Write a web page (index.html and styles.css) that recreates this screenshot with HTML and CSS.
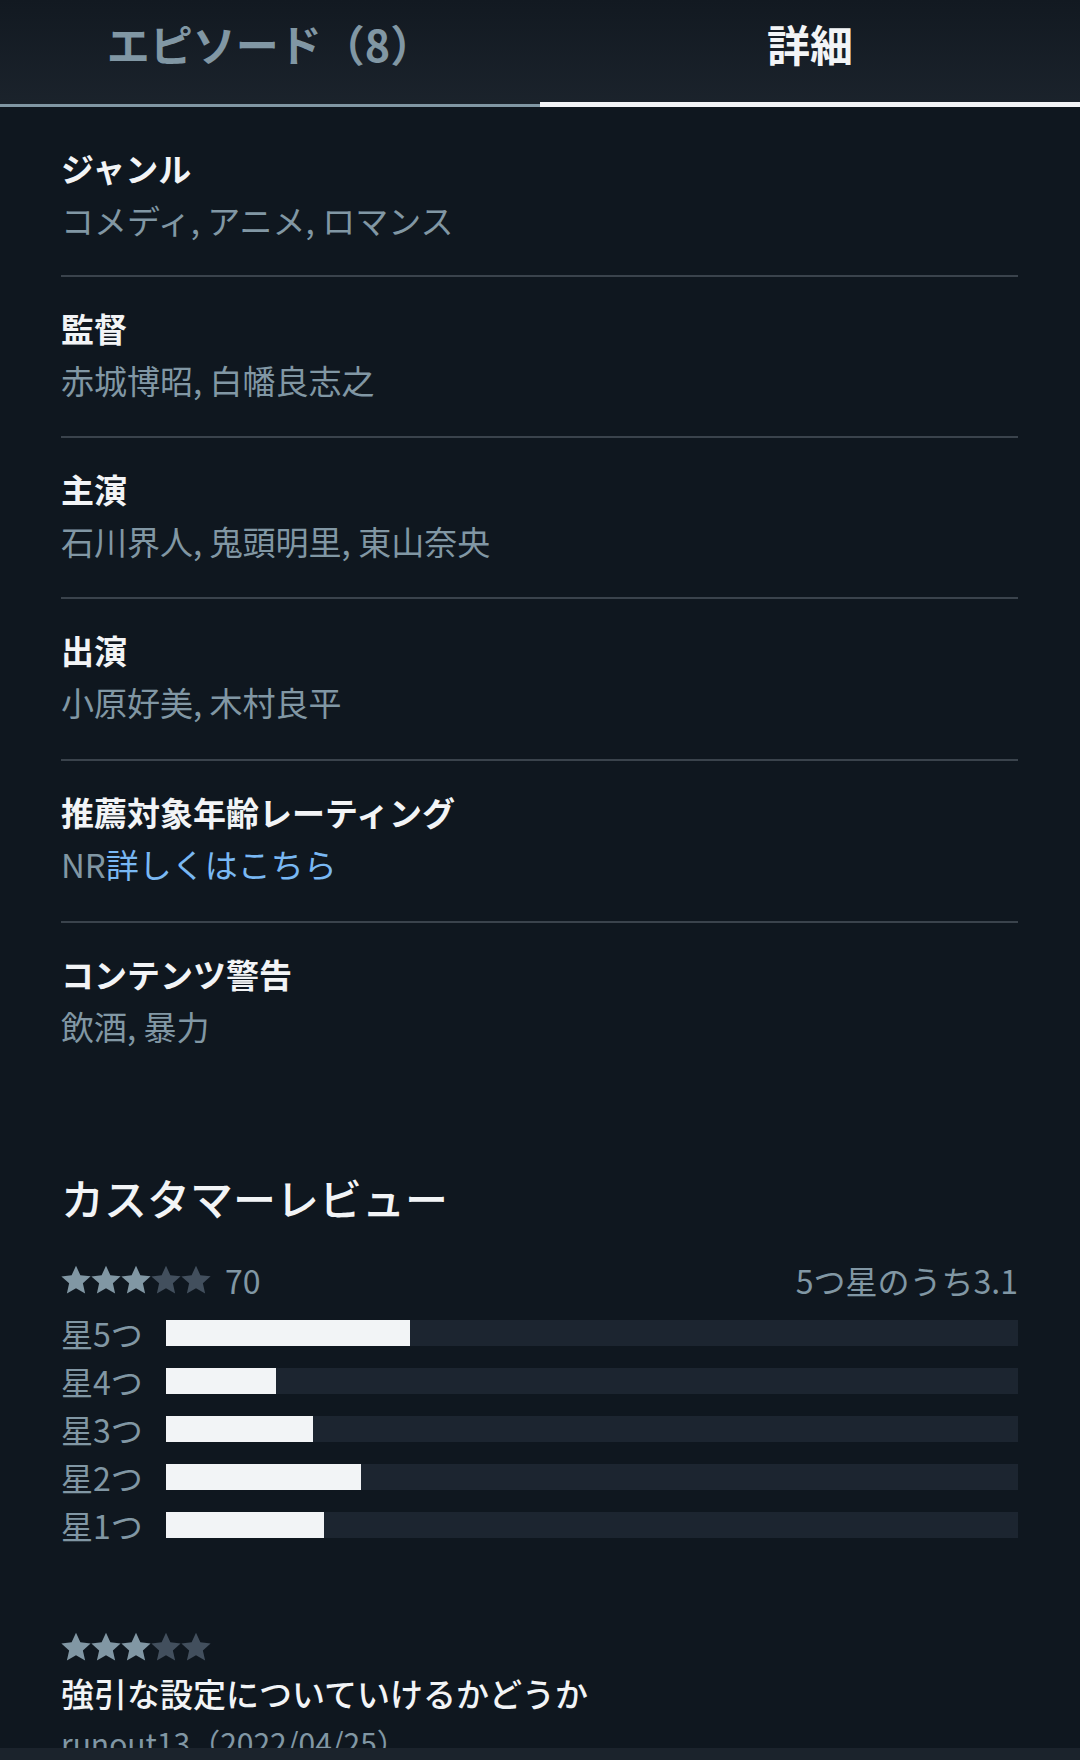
FILE: index.html
```html
<!DOCTYPE html>
<html lang="ja">
  <head>
    <meta charset="utf-8" />
    <meta name="viewport" content="width=device-width, initial-scale=1.0" />
    <link rel="stylesheet" href="styles.css">
  </head>
  <body>
    <header class="tabs">
      <a href="#" class="tab">エピソード（8）</a>
      <a href="#" class="tab active">詳細</a>
    </header>

    <main class="container">
      <dl class="details">
        <div class="detail-row">
          <dt class="detail-label">ジャンル</dt>
          <dd class="detail-value">コメディ, アニメ, ロマンス</dd>
        </div>
        <div class="detail-row">
          <dt class="detail-label">監督</dt>
          <dd class="detail-value">赤城博昭, 白幡良志之</dd>
        </div>
        <div class="detail-row">
          <dt class="detail-label">主演</dt>
          <dd class="detail-value">石川界人, 鬼頭明里, 東山奈央</dd>
        </div>
        <div class="detail-row">
          <dt class="detail-label">出演</dt>
          <dd class="detail-value">小原好美, 木村良平</dd>
        </div>
        <div class="detail-row">
          <dt class="detail-label">推薦対象年齢レーティング</dt>
          <dd class="detail-value">NR<a href="#" class="link">詳しくはこちら</a></dd>
        </div>
        <div class="detail-row">
          <dt class="detail-label">コンテンツ警告</dt>
          <dd class="detail-value">飲酒, 暴力</dd>
        </div>
      </dl>

      <section class="reviews">
        <h2 class="reviews-title">カスタマーレビュー</h2>

        <div class="summary">
          <div class="stars">
            <svg viewBox="0 0 24 24" class="star on"><path d="M12 .6l3.5 7.6 8.2.9-6.2 5.6 1.8 8.1L12 18.6l-7.3 4.2 1.8-8.1L.3 9.1l8.2-.9z"/></svg>
            <svg viewBox="0 0 24 24" class="star on"><path d="M12 .6l3.5 7.6 8.2.9-6.2 5.6 1.8 8.1L12 18.6l-7.3 4.2 1.8-8.1L.3 9.1l8.2-.9z"/></svg>
            <svg viewBox="0 0 24 24" class="star on"><path d="M12 .6l3.5 7.6 8.2.9-6.2 5.6 1.8 8.1L12 18.6l-7.3 4.2 1.8-8.1L.3 9.1l8.2-.9z"/></svg>
            <svg viewBox="0 0 24 24" class="star"><path d="M12 .6l3.5 7.6 8.2.9-6.2 5.6 1.8 8.1L12 18.6l-7.3 4.2 1.8-8.1L.3 9.1l8.2-.9z"/></svg>
            <svg viewBox="0 0 24 24" class="star"><path d="M12 .6l3.5 7.6 8.2.9-6.2 5.6 1.8 8.1L12 18.6l-7.3 4.2 1.8-8.1L.3 9.1l8.2-.9z"/></svg>
          </div>
          <span class="count">70</span>
          <span class="average">5つ星のうち3.1</span>
        </div>

        <div class="histogram">
          <div class="bar-row">
            <span class="bar-label">星5つ</span>
            <div class="bar-track"><div class="bar-fill" style="width: 28.6%"></div></div>
          </div>
          <div class="bar-row">
            <span class="bar-label">星4つ</span>
            <div class="bar-track"><div class="bar-fill" style="width: 12.9%"></div></div>
          </div>
          <div class="bar-row">
            <span class="bar-label">星3つ</span>
            <div class="bar-track"><div class="bar-fill" style="width: 17.2%"></div></div>
          </div>
          <div class="bar-row">
            <span class="bar-label">星2つ</span>
            <div class="bar-track"><div class="bar-fill" style="width: 22.9%"></div></div>
          </div>
          <div class="bar-row">
            <span class="bar-label">星1つ</span>
            <div class="bar-track"><div class="bar-fill" style="width: 18.6%"></div></div>
          </div>
        </div>

        <article class="review">
          <div class="stars">
            <svg viewBox="0 0 24 24" class="star on"><path d="M12 .6l3.5 7.6 8.2.9-6.2 5.6 1.8 8.1L12 18.6l-7.3 4.2 1.8-8.1L.3 9.1l8.2-.9z"/></svg>
            <svg viewBox="0 0 24 24" class="star on"><path d="M12 .6l3.5 7.6 8.2.9-6.2 5.6 1.8 8.1L12 18.6l-7.3 4.2 1.8-8.1L.3 9.1l8.2-.9z"/></svg>
            <svg viewBox="0 0 24 24" class="star on"><path d="M12 .6l3.5 7.6 8.2.9-6.2 5.6 1.8 8.1L12 18.6l-7.3 4.2 1.8-8.1L.3 9.1l8.2-.9z"/></svg>
            <svg viewBox="0 0 24 24" class="star"><path d="M12 .6l3.5 7.6 8.2.9-6.2 5.6 1.8 8.1L12 18.6l-7.3 4.2 1.8-8.1L.3 9.1l8.2-.9z"/></svg>
            <svg viewBox="0 0 24 24" class="star"><path d="M12 .6l3.5 7.6 8.2.9-6.2 5.6 1.8 8.1L12 18.6l-7.3 4.2 1.8-8.1L.3 9.1l8.2-.9z"/></svg>
          </div>
          <h3 class="review-title">強引な設定についていけるかどうか</h3>
          <p class="review-meta">runout13（2022/04/25）</p>
        </article>
      </section>
    </main>

    <div class="bottom-bar"></div>
  </body>
</html>
```

FILE: styles.css
```css
:root {
  --bg-primary: #0f171f;
  --bg-header-top: #121921;
  --bg-header-bottom: #1b232c;
  --text-primary: #f2f4f6;
  --text-secondary: #8197a4;
  --divider: #3a434c;
  --link: #79b8f3;
  --track: #1c2530;
  --star-on: #8197a4;
  --star-off: #424f5d;
}

* {
  box-sizing: border-box;
  margin: 0;
  padding: 0;
}

body {
  min-height: 100vh;
  background: var(--bg-primary);
  font-family: "Noto Sans CJK JP", "Noto Sans", sans-serif;
  color: var(--text-primary);
  overflow: hidden;
}

a {
  text-decoration: none;
}

.tabs {
  display: flex;
  height: 107px;
  background: linear-gradient(180deg, var(--bg-header-top), var(--bg-header-bottom));
}

.tab {
  flex: 1;
  display: flex;
  justify-content: center;
  padding-top: 13px;
  font-size: 43px;
  line-height: 60px;
  font-weight: 700;
  color: var(--text-secondary);
  border-bottom: 3px solid var(--text-secondary);
}

.tab.active {
  color: var(--text-primary);
  border-bottom: 5px solid var(--text-primary);
}

.container {
  padding: 0 62px 0 61px;
}

.details {
  padding-top: 9px;
}

.detail-row {
  display: flex;
  flex-direction: column;
  gap: 6px;
  padding: 28px 0 33px;
  border-bottom: 2px solid var(--divider);
}

.detail-row:first-child {
  padding-top: 29px;
  padding-bottom: 32px;
}

.detail-row:nth-child(4),
.detail-row:nth-child(5) {
  padding-bottom: 34px;
}

.detail-row:last-child {
  border-bottom: none;
}

.detail-label {
  font-size: 33px;
  line-height: 46px;
  font-weight: 700;
}

.detail-value {
  font-size: 33px;
  line-height: 46px;
  color: var(--text-secondary);
}

.link {
  color: var(--link);
}

.reviews {
  margin-top: 86px;
}

.reviews-title {
  font-size: 43px;
  line-height: 58px;
  font-weight: 500;
  margin-bottom: 30px;
}

.summary {
  display: flex;
  align-items: center;
  height: 48px;
  margin-bottom: 5px;
  font-size: 32px;
  color: var(--text-secondary);
}

.stars {
  display: flex;
}

.star {
  width: 30px;
  height: 30px;
  fill: var(--star-off);
}

.star.on {
  fill: var(--star-on);
}

.count {
  margin-left: 14px;
}

.average {
  margin-left: auto;
}

.histogram {
  display: flex;
  flex-direction: column;
}

.bar-row {
  display: flex;
  align-items: center;
  height: 48px;
}

.bar-label {
  width: 105px;
  font-size: 32px;
  line-height: 48px;
  color: var(--text-secondary);
}

.bar-track {
  flex: 1;
  height: 26px;
  background: var(--track);
}

.bar-fill {
  height: 100%;
  background: var(--text-primary);
}

.review {
  margin-top: 83px;
}

.review .stars {
  margin-bottom: 8px;
}

.review-title {
  font-size: 33px;
  line-height: 46px;
  font-weight: 500;
}

.review-meta {
  margin-top: 4px;
  font-size: 30px;
  line-height: 44px;
  color: var(--text-secondary);
}

.bottom-bar {
  position: fixed;
  left: 0;
  right: 0;
  bottom: 0;
  height: 12px;
  background: var(--bg-header-bottom);
}
```
